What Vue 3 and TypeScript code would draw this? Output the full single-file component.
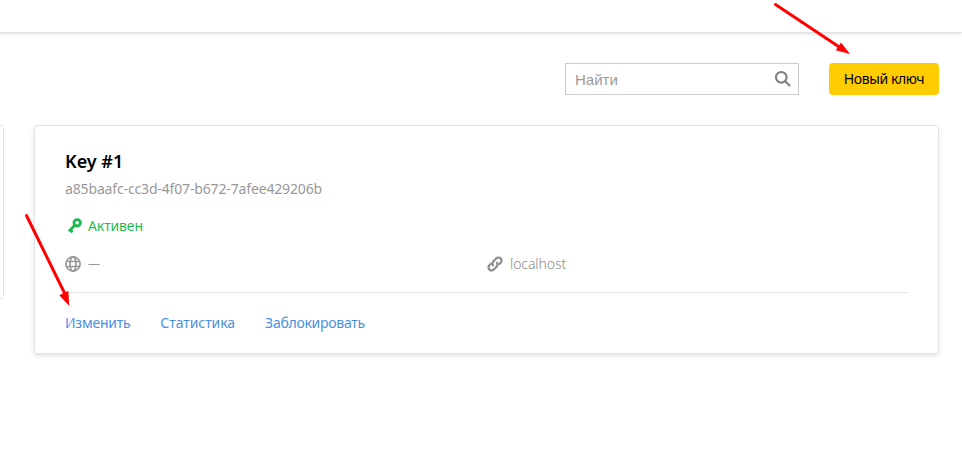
<script setup lang="ts">
import { ref } from 'vue'

interface Action {
  id: string
  label: string
}

const query = ref('')
const actions: Action[] = [
  { id: 'edit', label: 'Изменить' },
  { id: 'stats', label: 'Статистика' },
  { id: 'block', label: 'Заблокировать' },
]
</script>

<template>
  <div class="page">
    <header class="topbar"></header>

    <div class="toolbar">
      <label class="search">
        <input v-model="query" class="search-input" type="text" placeholder="Найти" />
        <svg class="search-icon" width="18" height="18" viewBox="0 0 18 18">
          <circle cx="7.3" cy="7.3" r="5.3" />
          <path d="M11.2 11.2L16 16" />
        </svg>
      </label>
      <button class="new-key" type="button">Новый ключ</button>
    </div>

    <main class="content">
      <aside class="side-card"></aside>
      <section class="card">
        <h2 class="title">Key #1</h2>
        <div class="uuid">a85baafc-cc3d-4f07-b672-7afee429206b</div>

        <div class="status">
          <svg class="key-icon" width="16" height="16" viewBox="0 0 16 16">
            <circle cx="10.2" cy="5.8" r="3.2" />
            <path d="M8 8L2 14.2M3 12.8L5.6 15.2" />
          </svg>
          <span class="status-text">Активен</span>
        </div>

        <div class="limits">
          <div class="limit">
            <svg class="globe-icon" width="16" height="16" viewBox="0 0 16 16">
              <circle cx="8" cy="8" r="7.1" />
              <ellipse cx="8" cy="8" rx="3" ry="7.1" />
              <path d="M1.6 5.5H14.4M1.6 10.5H14.4" />
            </svg>
            <span class="dash">—</span>
          </div>
          <div class="limit">
            <svg class="link-icon" width="16" height="16" viewBox="0 0 16 16">
              <path d="M6.6 10a3.2 3.2 0 0 1-.2-4.7l2.8-2.9a3.1 3.1 0 0 1 4.4 4.4L11.6 8.8" />
              <path d="M9.4 6a3.2 3.2 0 0 1 .2 4.7l-2.8 2.9a3.1 3.1 0 0 1-4.4-4.4L4.4 7.2" />
            </svg>
            <span class="host">localhost</span>
          </div>
        </div>

        <nav class="actions">
          <a v-for="a in actions" :key="a.id" class="action" :class="a.id">{{ a.label }}</a>
        </nav>
      </section>
    </main>

    <svg class="arrows" width="962" height="465" viewBox="0 0 962 465">
      <path class="shaft" d="M775.5 4.5L840 47.5" />
      <path class="head" d="M850 54L835.7 50.3L841 42.5Z" />
      <path class="shaft" d="M26.5 215.5L64.5 293" />
      <path class="head" d="M69.3 306L59.3 295.2L68.3 291Z" />
    </svg>
  </div>
</template>

<style>
body {
  margin: 0;
  background: #fff;
}
</style>

<style scoped>
.page {
  position: relative;
  width: 962px;
  height: 465px;
  overflow: hidden;
  background: #fff;
  font-family: 'Noto Sans', sans-serif;
  font-size: 14px;
  color: #000;
}
.topbar {
  height: 32px;
  box-shadow: 0 1px 0 #e3e3e3, 0 2px 4px rgba(0, 0, 0, 0.12);
}
.toolbar {
  display: flex;
  justify-content: flex-end;
  gap: 30px;
  padding: 31px 23px 0 0;
}
.search {
  box-sizing: border-box;
  display: flex;
  align-items: center;
  width: 234px;
  height: 32px;
  padding: 0 6px 0 9px;
  border: 1px solid #ccc;
}
.search-input {
  flex: 1;
  min-width: 0;
  padding: 0;
  border: 0;
  outline: 0;
  background: none;
  font: 15px 'Liberation Sans', sans-serif;
}
.search-input::placeholder {
  color: #999;
  opacity: 1;
}
.search-icon {
  fill: none;
  stroke: #808080;
  stroke-width: 2.1;
}
.new-key {
  width: 110px;
  height: 32px;
  padding: 0 0 2px;
  border: 0;
  border-radius: 4px;
  background: #fc0;
  color: #000;
  font: 14px 'Noto Sans', sans-serif;
  letter-spacing: -0.42px;
  white-space: nowrap;
}
.content {
  display: flex;
  align-items: flex-start;
  gap: 30px;
  margin: 30px 23px 0 0;
}
.side-card {
  box-sizing: border-box;
  width: 4px;
  height: 174px;
  border: 1px solid #e5e5e5;
  border-left: 0;
  border-radius: 0 3px 3px 0;
}
.card {
  box-sizing: border-box;
  flex: 1;
  height: 229px;
  padding: 23px 30px 0;
  border: 1px solid #e3e3e3;
  border-radius: 3px;
  box-shadow: 0 2px 5px rgba(0, 0, 0, 0.11);
}
.title {
  margin: 0;
  font-size: 18px;
  font-weight: 600;
  line-height: 24px;
}
.uuid {
  margin-top: 6px;
  line-height: 20px;
  letter-spacing: -0.15px;
  color: #999;
}
.status {
  display: flex;
  align-items: center;
  gap: 5px;
  height: 20px;
  margin-top: 16px;
  padding-left: 2px;
  letter-spacing: -0.12px;
  color: #1fb952;
}
.key-icon {
  fill: none;
  stroke: currentColor;
  stroke-width: 2.9;
}
.limits {
  display: grid;
  grid-template-columns: 422px 1fr;
  height: 28px;
  margin-top: 19px;
  padding-bottom: 10px;
  border-bottom: 1px solid #e3e3e3;
}
.limit {
  display: flex;
  align-items: center;
  gap: 7px;
  height: 20px;
  color: #999;
}
.dash {
  font-size: 12px;
  line-height: 20px;
}
.globe-icon {
  fill: none;
  stroke: currentColor;
  stroke-width: 1.7;
}
.link-icon {
  fill: none;
  stroke: #8c8c8c;
  stroke-width: 2.2;
}
.host {
  margin-top: -2px;
  font-weight: 300;
  letter-spacing: -0.08px;
  color: #8c8c8c;
}
.actions {
  display: flex;
  gap: 30px;
  margin-top: 20px;
  line-height: 20px;
}
.action {
  color: #4a90e2;
  cursor: pointer;
}
.edit {
  letter-spacing: -0.25px;
}
.stats {
  letter-spacing: -0.06px;
}
.block {
  letter-spacing: -0.28px;
}
.arrows {
  position: absolute;
  left: 0;
  top: 0;
  pointer-events: none;
}
.shaft {
  stroke: #f00;
  stroke-width: 3;
  stroke-linecap: round;
}
.head {
  fill: #f00;
}
</style>
